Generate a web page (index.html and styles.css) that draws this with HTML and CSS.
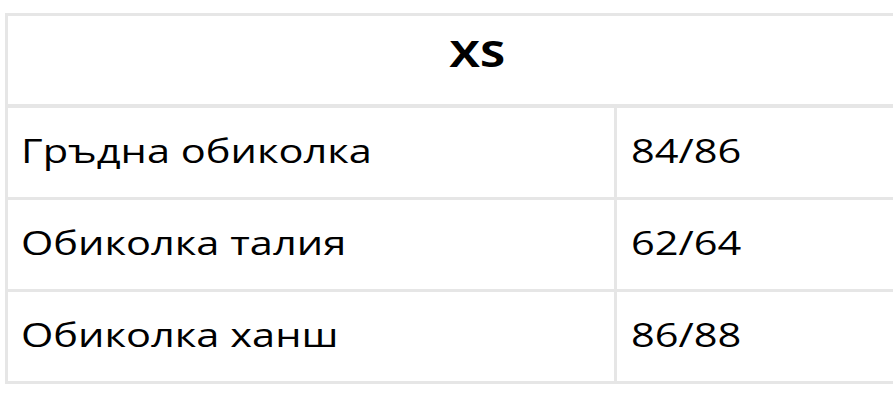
FILE: index.html
```html
<!DOCTYPE html>
<html lang="bg">
<head>
<meta charset="utf-8">
<title>Размери</title>
<link rel="stylesheet" href="styles.css">
</head>
<body>
<div class="page">
  <div class="size-table">
    <div class="cell head"><span class="txt">XS</span></div>
    <div class="cell label"><span class="txt">Гръдна обиколка</span></div>
    <div class="cell value"><span class="txt">84/86</span></div>
    <div class="cell label"><span class="txt">Обиколка талия</span></div>
    <div class="cell value"><span class="txt">62/64</span></div>
    <div class="cell label"><span class="txt">Обиколка ханш</span></div>
    <div class="cell value"><span class="txt">86/88</span></div>
  </div>
</div>
</body>
</html>
```
FILE: styles.css
```css
html, body {
  margin: 0;
  padding: 0;
  background: #ffffff;
  overflow: hidden;
}
.page {
  padding: 13px 0 0 5px;
  width: 960px;
}
.size-table {
  display: grid;
  grid-template-columns: 606px 329px;
  grid-auto-rows: 89px;
  gap: 3px;
  padding: 3px;
  background: #e6e6e6;
  width: max-content;
  font-family: "Open Sans", "Noto Sans", sans-serif;
  font-size: 32px;
  color: #000;
}
.cell {
  background: #fff;
  display: flex;
  align-items: center;
  box-sizing: border-box;
  padding-bottom: 4px;
}
.txt {
  display: inline-block;
  white-space: nowrap;
  transform: scaleX(1.3);
  transform-origin: left center;
}
.head {
  grid-column: 1 / 3;
  justify-content: center;
  font-weight: 700;
  font-size: 35px;
  height: 88px;
  padding-bottom: 14px;
}
.head .txt {
  transform-origin: center center;
}
.label {
  padding-left: 13px;
}
.value {
  padding-left: 14px;
}
```
